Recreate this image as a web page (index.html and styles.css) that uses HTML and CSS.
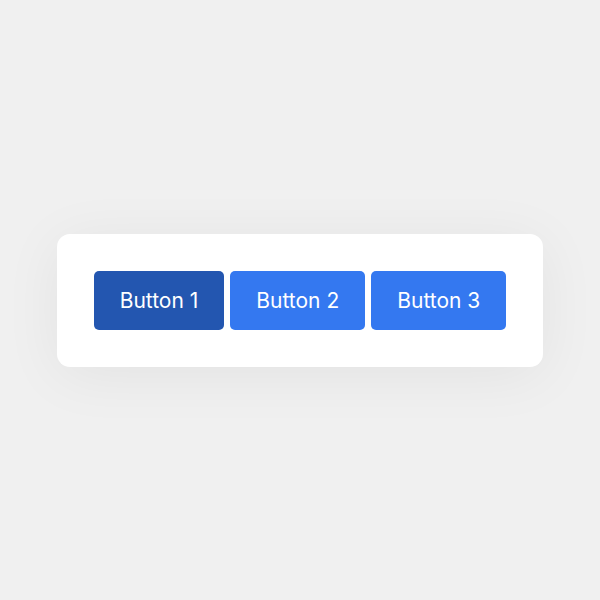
FILE: index.html
```html
<!DOCTYPE html>
<html lang="en">
<head>
<meta charset="utf-8">
<title>Button group</title>
<link rel="stylesheet" href="styles.css">
</head>
<body>
  <main class="stage">
    <div class="card">
      <div class="button-group">
        <button class="btn btn-active" type="button">Button 1</button>
        <button class="btn" type="button">Button 2</button>
        <button class="btn" type="button">Button 3</button>
      </div>
    </div>
  </main>
</body>
</html>
```
FILE: styles.css
```css
html, body {
  margin: 0;
  padding: 0;
}

body {
  background: #f0f0f0;
  font-family: Inter, "Noto Sans", "Liberation Sans", sans-serif;
}

.stage {
  min-height: 600px;
  display: flex;
  align-items: center;
  justify-content: center;
}

.card {
  background: #ffffff;
  border-radius: 13px;
  padding: 37px;
  box-shadow: 0 8px 60px rgba(0, 0, 0, 0.06);
}

.button-group {
  display: flex;
  gap: 6px;
}

.btn {
  height: 59px;
  padding: 0 26px;
  border: none;
  border-radius: 5px;
  background: #3478f0;
  color: #ffffff;
  font-family: inherit;
  font-size: 21px;
  font-weight: 400;
  cursor: pointer;
}

.btn-active {
  background: #2356b0;
}
```
